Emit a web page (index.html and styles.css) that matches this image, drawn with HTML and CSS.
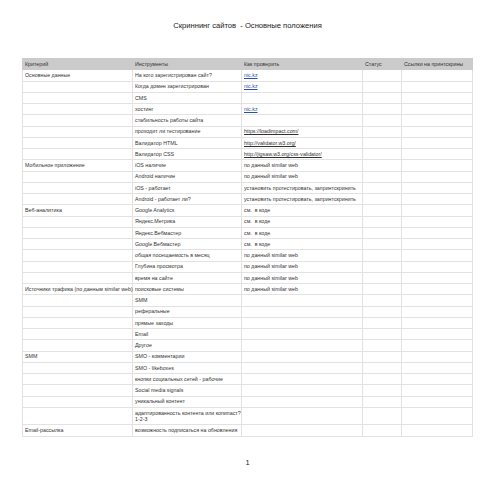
FILE: index.html
```html
<!DOCTYPE html>
<html lang="ru">
<head>
<meta charset="utf-8">
<title>Скриннинг сайтов</title>
<link rel="stylesheet" href="styles.css">
</head>
<body>
<div class="page">
  <h1 class="title">Скриннинг сайтов &nbsp;- Основные положения</h1>
  <table class="sheet">
    <colgroup>
      <col class="c1"><col class="c2"><col class="c3"><col class="c4"><col class="c5">
    </colgroup>
    <thead>
      <tr><th>Критерий</th><th>Инструменты</th><th>Как проверить</th><th>Статус</th><th>Ссылки на принтскрины</th></tr>
    </thead>
    <tbody>
      <tr><td>Основные данные</td><td>На кого зарегистрирован сайт?</td><td><a class="link" href="#">nic.kz</a></td><td></td><td></td></tr>
      <tr><td></td><td>Когда домен зарегистрирован</td><td><a class="link" href="#">nic.kz</a></td><td></td><td></td></tr>
      <tr><td></td><td>CMS</td><td></td><td></td><td></td></tr>
      <tr><td></td><td>хостинг</td><td><a class="link" href="#">nic.kz</a></td><td></td><td></td></tr>
      <tr><td></td><td>стабильность работы сайта</td><td></td><td></td><td></td></tr>
      <tr><td></td><td>проходит ли тестирование</td><td><span class="url">https://loadimpact.com/</span></td><td></td><td></td></tr>
      <tr><td></td><td>Валидатор HTML</td><td><span class="url">http://validator.w3.org/</span></td><td></td><td></td></tr>
      <tr><td></td><td>Валидатор CSS</td><td><span class="url">http://jigsaw.w3.org/css-validator/</span></td><td></td><td></td></tr>
      <tr><td>Мобильное приложение</td><td>iOS наличие</td><td>по данный similar web</td><td></td><td></td></tr>
      <tr><td></td><td>Android наличие</td><td>по данный similar web</td><td></td><td></td></tr>
      <tr><td></td><td>iOS - работает</td><td>установить протестировать, запринтскринить</td><td></td><td></td></tr>
      <tr><td></td><td>Android - работает ли?</td><td>установить протестировать, запринтскринить</td><td></td><td></td></tr>
      <tr><td>Веб-аналитика</td><td>Google Analytics</td><td>см. &nbsp;в коде</td><td></td><td></td></tr>
      <tr><td></td><td>Яндекс.Метрика</td><td>см. &nbsp;в коде</td><td></td><td></td></tr>
      <tr><td></td><td>Яндекс.Вебмастер</td><td>см. &nbsp;в коде</td><td></td><td></td></tr>
      <tr><td></td><td>Google Вебмастер</td><td>см. &nbsp;в коде</td><td></td><td></td></tr>
      <tr><td></td><td>общая посещаемость в месяц</td><td>по данный similar web</td><td></td><td></td></tr>
      <tr><td></td><td>Глубина просмотра</td><td>по данный similar web</td><td></td><td></td></tr>
      <tr><td></td><td>время на сайте</td><td>по данный similar web</td><td></td><td></td></tr>
      <tr><td>Источники трафика (по данным similar web)</td><td>поисковые системы</td><td>по данный similar web</td><td></td><td></td></tr>
      <tr><td></td><td>SMM</td><td></td><td></td><td></td></tr>
      <tr><td></td><td>реферальные</td><td></td><td></td><td></td></tr>
      <tr><td></td><td>прямые заходы</td><td></td><td></td><td></td></tr>
      <tr><td></td><td>Email</td><td></td><td></td><td></td></tr>
      <tr><td></td><td>Другое</td><td></td><td></td><td></td></tr>
      <tr><td>SMM</td><td>SMO - комментарии</td><td></td><td></td><td></td></tr>
      <tr><td></td><td>SMO - likeboxes</td><td></td><td></td><td></td></tr>
      <tr><td></td><td>кнопки социальных сетей - рабочие</td><td></td><td></td><td></td></tr>
      <tr><td></td><td>Social media signals</td><td></td><td></td><td></td></tr>
      <tr><td></td><td>уникальный контент</td><td></td><td></td><td></td></tr>
      <tr class="tall"><td></td><td>адаптированность контента или копипаст?<br>1-2-3</td><td></td><td></td><td></td></tr>
      <tr><td>Email-рассылка</td><td>возможность подписаться на обновления</td><td></td><td></td><td></td></tr>
    </tbody>
  </table>
  <div class="pagenum">1</div>
</div>
</body>
</html>
```

FILE: styles.css
```css
html, body {
  margin: 0;
  padding: 0;
  background: #ffffff;
}

.page {
  width: 495px;
  height: 495px;
  font-family: "Liberation Sans", Arial, sans-serif;
  color: #333333;
  display: flex;
  flex-direction: column;
  align-items: center;
}

.title {
  margin: 21px 0 0 0;
  font-size: 7.6px;
  line-height: 10px;
  font-weight: normal;
  color: #222222;
  height: 37px;
}

.sheet {
  align-self: flex-start;
  margin-left: 22px;
  width: 450px;
  border-collapse: collapse;
  table-layout: fixed;
  font-size: 5.3px;
}

.c1 { width: 110px; }
.c2 { width: 109px; }
.c3 { width: 121px; }
.c4 { width: 39px; }
.c5 { width: 71px; }

.sheet tr {
  height: 11.25px;
}

.sheet tr.tall {
  height: 17.6px;
}

.sheet th {
  background: #cbcbcb;
  font-weight: normal;
  text-align: left;
  line-height: 6.3px;
  padding: 0 2px;
  border: 1px solid #cbcbcb;
  color: #333333;
  white-space: nowrap;
}

.sheet td {
  line-height: 6.3px;
  padding: 0 2px;
  border: 1px solid #e2e2e2;
  vertical-align: middle;
  white-space: nowrap;
}

.link {
  color: #2a4fa8;
  text-decoration: underline;
}

.url {
  color: #333333;
  text-decoration: underline;
}

.pagenum {
  margin-top: 21px;
  font-size: 7.5px;
  line-height: 9px;
  color: #222222;
}
```
